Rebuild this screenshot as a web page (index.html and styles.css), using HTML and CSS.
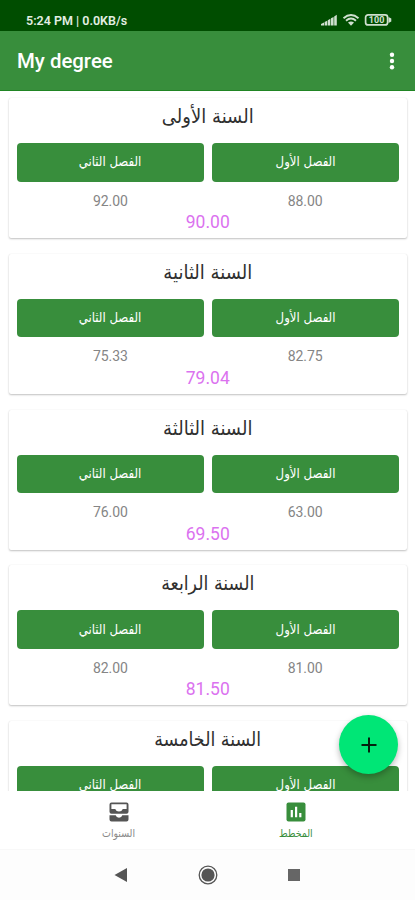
FILE: index.html
```html
<!DOCTYPE html>
<html lang="ar">
<head>
<meta charset="utf-8">
<meta name="viewport" content="width=device-width, initial-scale=1">
<title>My degree</title>
<link rel="stylesheet" href="styles.css">
</head>
<body>
<div class="screen">
  <div class="status">
    <span class="status-text">5:24 PM | 0.0KB/s</span>
    <svg class="status-icons" width="72" height="14" viewBox="0 0 72 14">
      <g fill="#cfe0cf"><path d="M0 12.500V11l3-1.600v3.100zM3.600 9l2.600-1.300v4.800H3.600zM6.800 7.200l2.600-1.400v6.700H6.800zM10 5.300l2.600-1.400v8.600H10zM13.200 3.400l2.600-1.600v10.700h-2.600z"/></g>
      <g fill="none" stroke="#cfe0cf" stroke-width="1.900"><path d="M22.500 5.200Q30 -1.200 37.500 5.200M25 7.700q5-4.200 10 0"/></g>
      <path d="M27 9.600q3-2.300 6 0l-3 3.200z" fill="#cfe0cf"/>
      <rect x="44.600" y="1.900" width="22" height="10" rx="2.500" fill="none" stroke="#cfe0cf" stroke-width="1.700"/>
      <path d="M67.500 4l2.800 1.500v3L67.500 10z" fill="#cfe0cf"/>
      <text class="battery" x="55.600" y="10.200" text-anchor="middle">100</text>
    </svg>
  </div>
  <header class="appbar">
    <h1>My degree</h1>
    <svg width="6" height="20" viewBox="0 0 6 20" fill="#fff"><circle cx="3" cy="3.700" r="2.200"/><circle cx="3" cy="10" r="2.200"/><circle cx="3" cy="16.300" r="2.200"/></svg>
  </header>
  <main class="list" dir="rtl">
    <section class="card">
      <h2>السنة الأولى</h2>
      <div class="terms"><button><span>الفصل الأول</span></button><button><span>الفصل الثاني</span></button></div>
      <div class="scores"><span>88.00</span><span>92.00</span></div>
      <div class="average">90.00</div>
    </section>
    <section class="card">
      <h2>السنة الثانية</h2>
      <div class="terms"><button><span>الفصل الأول</span></button><button><span>الفصل الثاني</span></button></div>
      <div class="scores"><span>82.75</span><span>75.33</span></div>
      <div class="average">79.04</div>
    </section>
    <section class="card">
      <h2>السنة الثالثة</h2>
      <div class="terms"><button><span>الفصل الأول</span></button><button><span>الفصل الثاني</span></button></div>
      <div class="scores"><span>63.00</span><span>76.00</span></div>
      <div class="average">69.50</div>
    </section>
    <section class="card">
      <h2 class="narrow">السنة الرابعة</h2>
      <div class="terms"><button><span>الفصل الأول</span></button><button><span>الفصل الثاني</span></button></div>
      <div class="scores"><span>81.00</span><span>82.00</span></div>
      <div class="average">81.50</div>
    </section>
    <section class="card">
      <h2 class="narrow">السنة الخامسة</h2>
      <div class="terms"><button><span>الفصل الأول</span></button><button><span>الفصل الثاني</span></button></div>
    </section>
  </main>
  <nav class="tabs" dir="rtl">
    <a class="tab active">
      <svg width="20" height="20" viewBox="0 0 20 20"><rect x=".5" y=".5" width="19" height="19" rx="2" fill="#388e3c"/><path d="M4.700 8h2.200v7.200H4.700zM9 4.700h2.200v10.500H9zM13.200 11h2.200v4.200h-2.200z" fill="#fff"/></svg>
      <span>المخطط</span>
    </a>
    <a class="tab">
      <svg width="20" height="20" viewBox="0 0 20 20" fill="#555"><path fill-rule="evenodd" d="M2.500.4h15a2 2 0 0 1 2 2v7.400a2 2 0 0 1-2 2h-15a2 2 0 0 1-2-2V2.400a2 2 0 0 1 2-2zM2.400 2.300v4.600h3.800q1 2.600 3.800 2.600t3.800-2.600h3.800V2.300z"/><path d="M.5 13.300h6.200q.6 2.400 3.300 2.400t3.300-2.400h6.200v4.300a2 2 0 0 1-2 2h-15a2 2 0 0 1-2-2z"/></svg>
      <span>السنوات</span>
    </a>
  </nav>
  <div class="system">
    <svg width="14" height="16" viewBox="0 0 14 16"><path d="M.5 8L13 1v14z" fill="#555"/></svg>
    <svg width="20" height="20" viewBox="0 0 20 20"><circle cx="10" cy="10" r="8.800" fill="none" stroke="#555" stroke-width="1.300"/><circle cx="10" cy="10" r="6.600" fill="#555"/></svg>
    <svg width="14" height="14" viewBox="0 0 14 14"><rect x="1" y="1" width="12" height="12" fill="#666"/></svg>
  </div>
  <button class="fab" aria-label="add"><svg width="18" height="18" viewBox="0 0 18 18"><path d="M9 1.500v15M1.500 9h15" stroke="#05200f" stroke-width="2"/></svg></button>
</div>
</body>
</html>
```
FILE: styles.css
```css
* { box-sizing: border-box; }
body { margin: 0; background: #fff; font-family: Roboto, "DejaVu Sans", sans-serif; }
.screen { position: relative; width: 415px; height: 900px; overflow: hidden; display: flex; flex-direction: column; }
.status { flex: 0 0 31px; background: #004d00; color: #e2eee2; display: flex; justify-content: space-between; align-items: flex-start; padding: 13px 22px 0 26px; }
.status-text { font-size: 12.500px; line-height: 15px; font-weight: 600; }
.status-icons { display: block; }
.battery { font: 700 9px Roboto, sans-serif; fill: #cfe0cf; }
.appbar { flex: 0 0 59.500px; background: #388e3c; border-bottom: 1px solid #208524; display: flex; justify-content: space-between; align-items: center; padding: 2px 20px 0 17px; }
.appbar h1 { margin: 0; color: #fff; font-size: 20.400px; line-height: 24px; font-weight: 500; }
.list { flex: 0 0 700.500px; overflow: hidden; padding: 7.500px 8px 0 9px; display: flex; flex-direction: column; gap: 15.800px; }
.card { flex: 0 0 140px; background: #fff; border-radius: 2px; box-shadow: 0 1px 2px rgba(0,0,0,.24), 0 0 1px rgba(0,0,0,.1); padding: 5px 8.500px 0 8px; }
.card h2 { margin: 0; height: 40px; font: 400 18px/28px "DejaVu Sans", sans-serif; color: #303030; text-align: center; transform: scaleY(1.1); transform-origin: 50% 16px; }
.card h2.narrow { transform: scale(.97, 1.1); }
.terms { display: flex; gap: 8px; }
.terms button { flex: 1; height: 38.500px; padding: 0 0 2px; border: 0; border-radius: 4px; background: #388e3c; color: #fff; font: 400 12px/18px "DejaVu Sans", sans-serif; }
.terms span { display: inline-block; transform: scale(.98, 1.15); }
.scores { display: flex; gap: 8px; margin-top: 10px; }
.scores span { flex: 1; text-align: center; color: #858585; font-size: 14px; line-height: 18.500px; letter-spacing: -.1px; }
.average { text-align: center; color: #db72ef; font-size: 17.500px; line-height: 24px; }
.tabs { flex: 0 0 59px; background: #fff; display: flex; padding: 0 30px; position: relative; border-bottom: 1px solid #f8f8f8; }
.tab { flex: 1; display: flex; flex-direction: column; align-items: center; padding-top: 11px; color: #888; font: 400 10px/14px "DejaVu Sans", sans-serif; }
.tab span { margin-top: 5px; transform: scale(.94, 1.1); }
.tab.active { color: #388e3c; }
.system { flex: 1; background: #fdfdfd; display: flex; justify-content: space-between; align-items: center; padding: 0 114px; }
.fab { position: absolute; left: 339px; top: 715px; width: 59px; height: 59px; padding: 0; border: 0; border-radius: 50%; background: #00e676; display: flex; align-items: center; justify-content: center; box-shadow: 0 3px 6px rgba(0,0,0,.28); }
```
